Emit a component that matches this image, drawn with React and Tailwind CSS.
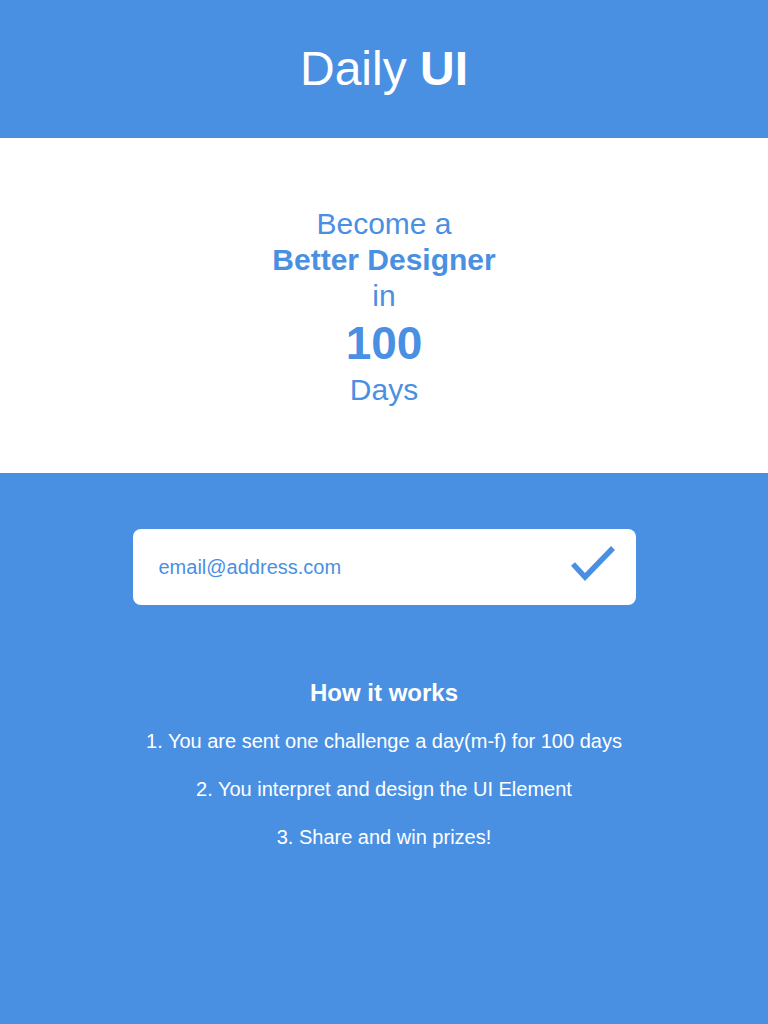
import React, { useState } from "react";

const pasos = [
  "1. You are sent one challenge a day(m-f) for 100 days",
  "2. You interpret and design the UI Element",
  "3. Share and win prizes!",
];

function Check() {
  return (
    <svg width="46" height="40" viewBox="0 0 46 40" fill="none">
      <path d="M3 20 L15 33 L43 4" stroke="#4A90E2" strokeWidth="5.5" />
    </svg>
  );
}

export default function App() {
  const [email, setEmail] = useState("");

  return (
    <div className="min-h-screen bg-[#4A90E2] font-['Liberation_Sans',Arial,sans-serif]">
      <header className="h-[138px] flex items-center justify-center">
        <h1 className="text-[48px] text-white leading-none">
          Daily <span className="font-bold">UI</span>
        </h1>
      </header>

      <section className="bg-white h-[335px] flex flex-col items-center justify-center text-[#4A90E2] text-[30px] leading-[36px] pt-[3px]">
        <div>Become a</div>
        <div className="font-bold">Better Designer</div>
        <div>in</div>
        <div className="font-bold text-[46px] leading-[58px]">100</div>
        <div>Days</div>
      </section>

      <section className="flex flex-col items-center pt-[56px]">
        <div className="w-[503px] h-[76px] bg-white rounded-lg flex items-center pl-[26px] pr-[20px]">
          <input
            value={email}
            onChange={(e) => setEmail(e.target.value)}
            placeholder="email@address.com"
            className="flex-1 outline-none text-[20px] text-[#4A90E2] placeholder:text-[#4A90E2] bg-transparent"
          />
          <button className="mt-[-6px]">
            <Check />
          </button>
        </div>

        <h2 className="mt-[73px] text-white font-bold text-[24px] leading-[30px]">How it works</h2>
        <ul className="mt-[20px] flex flex-col gap-[22px] text-white text-[20px] leading-[26px] text-center">
          {pasos.map((p) => (
            <li key={p}>{p}</li>
          ))}
        </ul>
      </section>
    </div>
  );
}
